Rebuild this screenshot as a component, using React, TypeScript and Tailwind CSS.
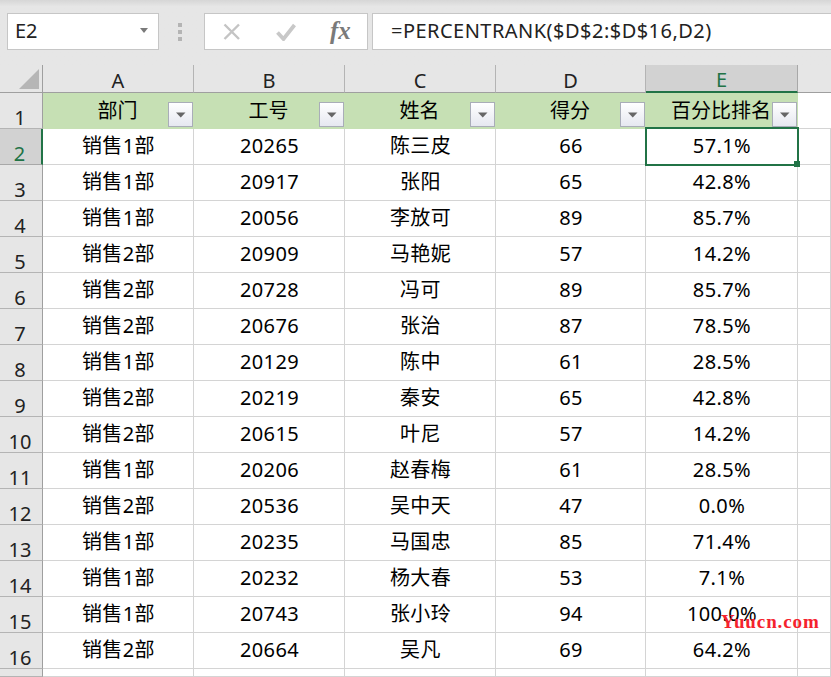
import { ReactNode } from 'react';

const font = { fontFamily: '"Noto Sans", "Noto Sans CJK SC", sans-serif' };

const rows = [
  ['销售1部', '20265', '陈三皮', '66', '57.1%'],
  ['销售1部', '20917', '张阳', '65', '42.8%'],
  ['销售1部', '20056', '李放可', '89', '85.7%'],
  ['销售2部', '20909', '马艳妮', '57', '14.2%'],
  ['销售2部', '20728', '冯可', '89', '85.7%'],
  ['销售2部', '20676', '张治', '87', '78.5%'],
  ['销售1部', '20129', '陈中', '61', '28.5%'],
  ['销售2部', '20219', '秦安', '65', '42.8%'],
  ['销售2部', '20615', '叶尼', '57', '14.2%'],
  ['销售1部', '20206', '赵春梅', '61', '28.5%'],
  ['销售2部', '20536', '吴中天', '47', '0.0%'],
  ['销售1部', '20235', '马国忠', '85', '71.4%'],
  ['销售1部', '20232', '杨大春', '53', '7.1%'],
  ['销售1部', '20743', '张小玲', '94', '100.0%'],
  ['销售2部', '20664', '吴凡', '69', '64.2%'],
];

const columns = ['A', 'B', 'C', 'D', 'E'];
const headers = ['部门', '工号', '姓名', '得分', '百分比排名'];

function ColumnHead({ label, active }: { label: string; active?: boolean }) {
  return (
    <div
      className={
        active
          ? 'flex items-center justify-center bg-[#d2d2d2] border-r border-r-[#a8a8a8] border-b-2 border-b-[#217346] text-[#217346] text-[20px] leading-none pt-[4px]'
          : 'flex items-center justify-center bg-[#e6e6e6] border-r border-r-[#b4b4b4] border-b border-b-[#9f9f9f] text-[#222] text-[20px] leading-none pt-[4px]'
      }
    >
      {label}
    </div>
  );
}

function RowHead({ label, active }: { label: string; active?: boolean }) {
  return (
    <div
      className={
        active
          ? 'flex items-end justify-center bg-[#d2d2d2] border-r-2 border-r-[#217346] border-b border-b-[#a8a8a8] text-[#217346] text-[20px] leading-none pr-[2px]'
          : 'flex items-end justify-center bg-[#e6e6e6] border-r border-r-[#9f9f9f] border-b border-b-[#b4b4b4] text-[#222] text-[20px] leading-none pr-[2px]'
      }
    >
      {label}
    </div>
  );
}

function FilterButton() {
  return (
    <div className="absolute right-[1px] bottom-[2px] w-[25px] h-[25px] flex items-center justify-center border border-[#a9adb8] bg-gradient-to-b from-white to-[#e6e8f0]">
      <svg width="10" height="6" viewBox="0 0 10 6">
        <path d="M0 0.5h9.5L4.75 5.5z" fill="#666" />
      </svg>
    </div>
  );
}

function Cell({ children }: { children?: ReactNode }) {
  return (
    <div className="flex items-center justify-center border-r border-b border-[#d4d4d4] bg-white text-[20px] leading-none text-black tracking-[0.4px] pl-[1px] pb-[1px]">
      {children}
    </div>
  );
}

export default function App() {
  return (
    <div className="relative w-[831px] h-[677px] overflow-hidden bg-[#e6e6e6]" style={font}>
      {/* Name box and formula bar */}
      <div className="h-[65px] flex items-start pt-[13px] bg-gradient-to-b from-[#d6d6d6] via-[#e6e6e6] via-[10%] to-[#e6e6e6]">
        <div className="ml-[7px] w-[152px] h-[37px] flex items-center justify-between pl-[7px] pr-[10px] pb-[2px] bg-white border border-[#c6c6c6]">
          <span className="text-[20px] leading-none text-[#222]">E2</span>
          <svg width="8" height="5" viewBox="0 0 8 5">
            <path d="M0 0h8L4 5z" fill="#7a7a7a" />
          </svg>
        </div>
        <div className="w-[45px] h-[37px] flex flex-col items-center justify-center gap-[3px] pr-[4px]">
          <span className="w-[4px] h-[4px] bg-[#b4b4b4]" />
          <span className="w-[4px] h-[4px] bg-[#b4b4b4]" />
          <span className="w-[4px] h-[4px] bg-[#b4b4b4]" />
        </div>
        <div className="w-[164px] h-[37px] flex items-center bg-white border border-[#c6c6c6]">
          <svg className="ml-[18px]" width="18" height="18" viewBox="0 0 18 18">
            <path d="M1.5 1.5L16 16M16 1.5L1.5 16" stroke="#c4c4c4" strokeWidth="2.4" fill="none" />
          </svg>
          <svg className="ml-[35px]" width="20" height="18" viewBox="0 0 20 18">
            <path d="M1.5 9.5L7.5 16L18.5 2" stroke="#c8c8c8" strokeWidth="3.8" fill="none" />
          </svg>
          <span
            className="ml-[34px] text-[25px] leading-none font-bold italic text-[#7a7a7a] pb-[2px]"
            style={{ fontFamily: '"Liberation Serif", serif' }}
          >
            fx
          </span>
        </div>
        <div className="ml-[4px] flex-1 h-[37px] flex items-center pl-[18px] pb-[2px] bg-white border-y border-l border-[#c6c6c6] text-[20px] leading-none text-[#222] tracking-[0.47px]">
          =PERCENTRANK($D$2:$D$16,D2)
        </div>
      </div>

      {/* Sheet */}
      <div className="grid grid-cols-[43px_151px_151px_151px_150px_152px_33px] grid-rows-[28px_repeat(16,36px)_8px]">
        <div className="flex items-end justify-end pr-[3px] pb-[3px] bg-[#e6e6e6] border-r border-r-[#9f9f9f] border-b border-b-[#9f9f9f]">
          <svg width="20" height="20" viewBox="0 0 20 20">
            <path d="M20 0v20H0z" fill="#b6b6b6" />
          </svg>
        </div>
        {columns.map(c => (
          <ColumnHead key={c} label={c} active={c === 'E'} />
        ))}
        <div className="bg-[#e6e6e6] border-b border-b-[#9f9f9f]" />

        <RowHead label="1" />
        {headers.map(h => (
          <div key={h} className="relative flex items-center justify-center bg-[#c6e0b4] text-[20px] leading-none text-black pr-[2px]">
            {h}
            <FilterButton />
          </div>
        ))}
        <div className="bg-white border-b border-[#d4d4d4]" />

        {rows.map((row, i) => (
          <div key={row[1]} className="contents">
            <RowHead label={String(i + 2)} active={i === 0} />
            {row.map((value, j) => (
              <Cell key={j}>{value}</Cell>
            ))}
            <Cell />
          </div>
        ))}

        <RowHead label="" />
        <Cell />
        <Cell />
        <Cell />
        <Cell />
        <Cell />
        <Cell />
      </div>

      {/* Active cell frame */}
      <div className="absolute left-[645px] top-[127px] w-[154px] h-[39px] border-2 border-[#217346]">
        <div className="absolute right-[-3px] bottom-[-3px] w-[6px] h-[6px] bg-[#217346]" />
      </div>

      {/* Watermark */}
      <div
        className="absolute left-[721px] top-[612px] text-[19px] leading-none font-bold text-[#f5222d] tracking-[0.9px]"
        style={{ fontFamily: '"Liberation Serif", serif' }}
      >
        Yuucn.com
      </div>
    </div>
  );
}
